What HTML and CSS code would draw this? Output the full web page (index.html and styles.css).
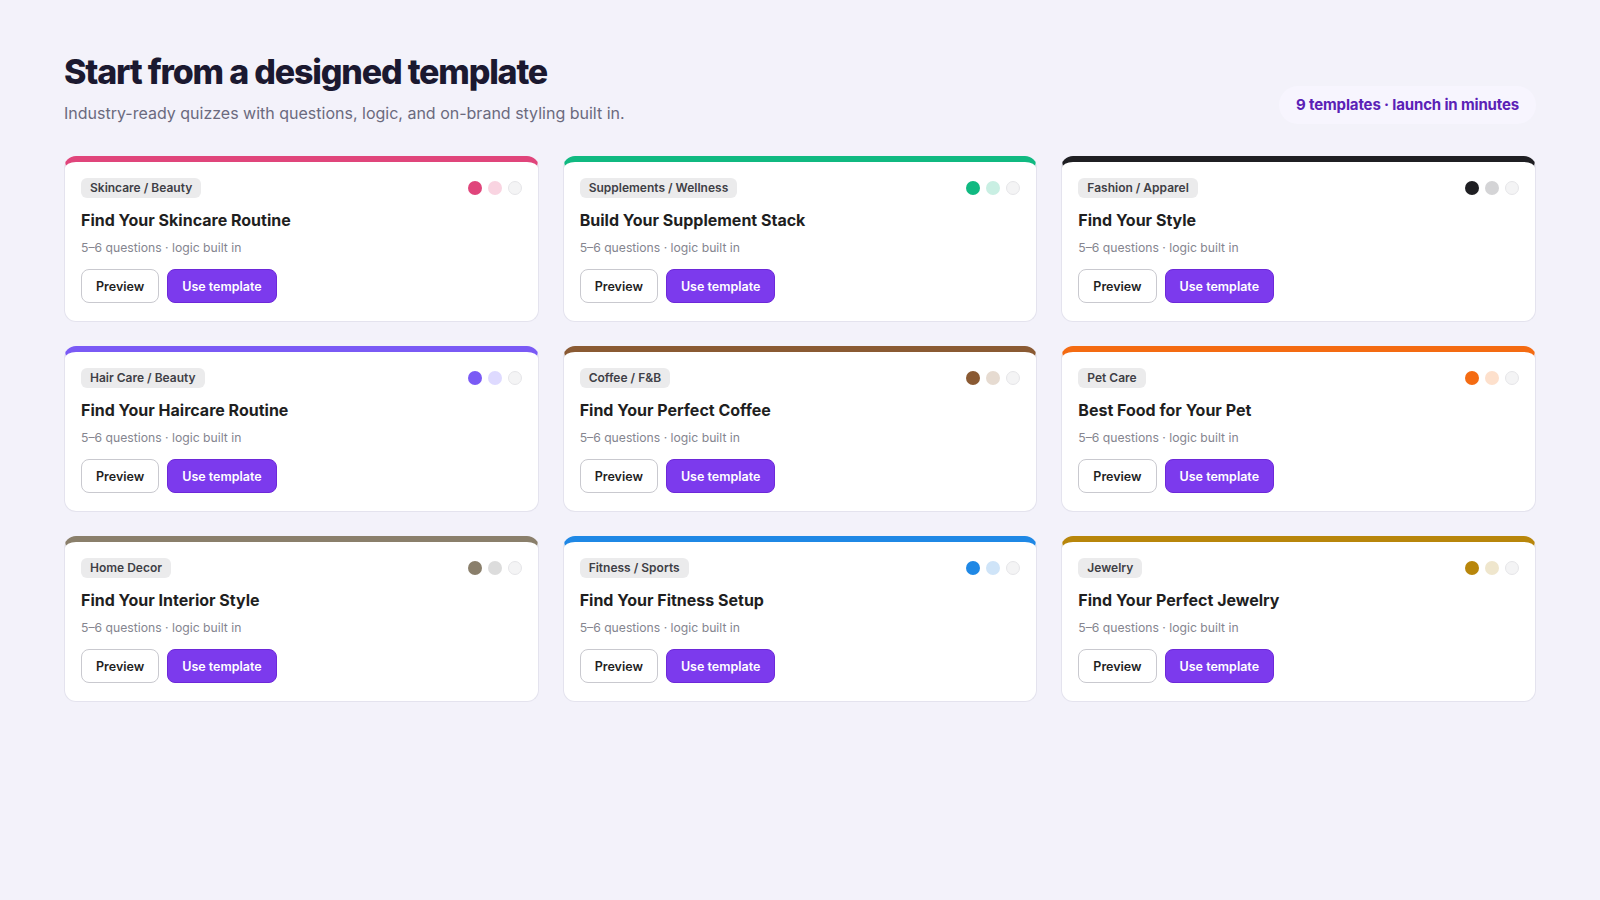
FILE: index.html
```html
<!DOCTYPE html>
<html lang="en">
<head>
    <meta charset="UTF-8">
    <meta name="viewport" content="width=device-width, initial-scale=1.0">
    <title>Templates</title>
    <link rel="stylesheet" href="styles.css">
</head>
<body>
    <div class="page">
        <div class="header">
            <div>
                <h1>Start from a designed template</h1>
                <p class="subtitle">Industry-ready quizzes with questions, logic, and on-brand styling built in.</p>
            </div>
            <div class="badge">9 templates · launch in minutes</div>
        </div>

        <div class="grid">
            <div class="card skincare">
                <div class="card-top">
                    <span class="tag">Skincare / Beauty</span>
                    <div class="dots"><span class="dot main"></span><span class="dot tint"></span><span class="dot light"></span></div>
                </div>
                <h3>Find Your Skincare Routine</h3>
                <p class="meta">5–6 questions · logic built in</p>
                <div class="actions"><button class="btn">Preview</button><button class="btn primary">Use template</button></div>
            </div>
            <div class="card supplements">
                <div class="card-top">
                    <span class="tag">Supplements / Wellness</span>
                    <div class="dots"><span class="dot main"></span><span class="dot tint"></span><span class="dot light"></span></div>
                </div>
                <h3>Build Your Supplement Stack</h3>
                <p class="meta">5–6 questions · logic built in</p>
                <div class="actions"><button class="btn">Preview</button><button class="btn primary">Use template</button></div>
            </div>
            <div class="card fashion">
                <div class="card-top">
                    <span class="tag">Fashion / Apparel</span>
                    <div class="dots"><span class="dot main"></span><span class="dot tint"></span><span class="dot light"></span></div>
                </div>
                <h3>Find Your Style</h3>
                <p class="meta">5–6 questions · logic built in</p>
                <div class="actions"><button class="btn">Preview</button><button class="btn primary">Use template</button></div>
            </div>
            <div class="card haircare">
                <div class="card-top">
                    <span class="tag">Hair Care / Beauty</span>
                    <div class="dots"><span class="dot main"></span><span class="dot tint"></span><span class="dot light"></span></div>
                </div>
                <h3>Find Your Haircare Routine</h3>
                <p class="meta">5–6 questions · logic built in</p>
                <div class="actions"><button class="btn">Preview</button><button class="btn primary">Use template</button></div>
            </div>
            <div class="card coffee">
                <div class="card-top">
                    <span class="tag">Coffee / F&amp;B</span>
                    <div class="dots"><span class="dot main"></span><span class="dot tint"></span><span class="dot light"></span></div>
                </div>
                <h3>Find Your Perfect Coffee</h3>
                <p class="meta">5–6 questions · logic built in</p>
                <div class="actions"><button class="btn">Preview</button><button class="btn primary">Use template</button></div>
            </div>
            <div class="card pets">
                <div class="card-top">
                    <span class="tag">Pet Care</span>
                    <div class="dots"><span class="dot main"></span><span class="dot tint"></span><span class="dot light"></span></div>
                </div>
                <h3>Best Food for Your Pet</h3>
                <p class="meta">5–6 questions · logic built in</p>
                <div class="actions"><button class="btn">Preview</button><button class="btn primary">Use template</button></div>
            </div>
            <div class="card decor">
                <div class="card-top">
                    <span class="tag">Home Decor</span>
                    <div class="dots"><span class="dot main"></span><span class="dot tint"></span><span class="dot light"></span></div>
                </div>
                <h3>Find Your Interior Style</h3>
                <p class="meta">5–6 questions · logic built in</p>
                <div class="actions"><button class="btn">Preview</button><button class="btn primary">Use template</button></div>
            </div>
            <div class="card fitness">
                <div class="card-top">
                    <span class="tag">Fitness / Sports</span>
                    <div class="dots"><span class="dot main"></span><span class="dot tint"></span><span class="dot light"></span></div>
                </div>
                <h3>Find Your Fitness Setup</h3>
                <p class="meta">5–6 questions · logic built in</p>
                <div class="actions"><button class="btn">Preview</button><button class="btn primary">Use template</button></div>
            </div>
            <div class="card jewelry">
                <div class="card-top">
                    <span class="tag">Jewelry</span>
                    <div class="dots"><span class="dot main"></span><span class="dot tint"></span><span class="dot light"></span></div>
                </div>
                <h3>Find Your Perfect Jewelry</h3>
                <p class="meta">5–6 questions · logic built in</p>
                <div class="actions"><button class="btn">Preview</button><button class="btn primary">Use template</button></div>
            </div>
        </div>
    </div>
</body>
</html>
```

FILE: styles.css
```css
body {
    margin: 0;
    font-family: Inter, "Noto Sans", sans-serif;
    background-color: #f3f2fa;
    color: #1f1f1f;
}
.page {
    padding: 50px 64px;
}
.header {
    display: flex;
    justify-content: space-between;
    align-items: flex-end;
    margin-bottom: 32px;
}
h1 {
    margin: 0;
    font-size: 34px;
    line-height: 44px;
    font-weight: 800;
    letter-spacing: -0.035em;
    color: #1b1930;
}
.subtitle {
    margin: 8px 0 0;
    font-size: 16px;
    line-height: 22px;
    color: #6b6a7e;
}
.badge {
    padding: 10px 17px;
    border-radius: 999px;
    background-color: #f7f5fe;
    color: #5b21b6;
    font-size: 15px;
    font-weight: 700;
    line-height: 18px;
    letter-spacing: -0.01em;
}
.grid {
    display: grid;
    grid-template-columns: repeat(3, 1fr);
    gap: 24px;
}
.card {
    background-color: #fff;
    border: 1px solid #e4e3ee;
    border-top: 6px solid var(--main);
    border-radius: 12px;
    padding: 16px 16px 18px;
}
.card-top {
    display: flex;
    justify-content: space-between;
    align-items: center;
}
.tag {
    padding: 3px 9px;
    border-radius: 6px;
    background-color: #ebebec;
    color: #3f3f46;
    font-size: 12px;
    font-weight: 600;
    line-height: 14px;
}
.dots {
    display: flex;
    gap: 6px;
}
.dot {
    width: 14px;
    height: 14px;
    border-radius: 50%;
    box-sizing: border-box;
}
.dot.main {
    background-color: var(--main);
}
.dot.tint {
    background-color: var(--tint);
}
.dot.light {
    background-color: #f4f4f5;
    border: 1px solid #e6e6e9;
}
h3 {
    margin: 10px 0 0;
    font-size: 16px;
    line-height: 24px;
    font-weight: 700;
    color: #1f1f1f;
}
.meta {
    margin: 8px 0 0;
    font-size: 12.2px;
    line-height: 16px;
    color: #85858f;
}
.actions {
    display: flex;
    gap: 8px;
    margin-top: 13px;
}
.btn {
    height: 34px;
    padding: 0 14px;
    border: 1px solid #c9c9cf;
    border-radius: 8px;
    background-color: #fff;
    color: #1f1f1f;
    font-family: inherit;
    font-size: 12.5px;
    font-weight: 600;
}
.btn.primary {
    border-color: #6d28d9;
    background-color: #7c3aed;
    color: #fff;
}

.skincare { --main: #e0457b; --tint: #f9d4e1; }
.supplements { --main: #10b981; --tint: #c9efe3; }
.fashion { --main: #1f1f23; --tint: #d4d4d6; }
.haircare { --main: #7a5af5; --tint: #dedaff; }
.coffee { --main: #8a5a33; --tint: #e6dbd1; }
.pets { --main: #f46b12; --tint: #fde0cc; }
.decor { --main: #8a7f6b; --tint: #dcdcdc; }
.fitness { --main: #1f88e5; --tint: #cfe4f8; }
.jewelry { --main: #b8860b; --tint: #efe6cd; }
```
